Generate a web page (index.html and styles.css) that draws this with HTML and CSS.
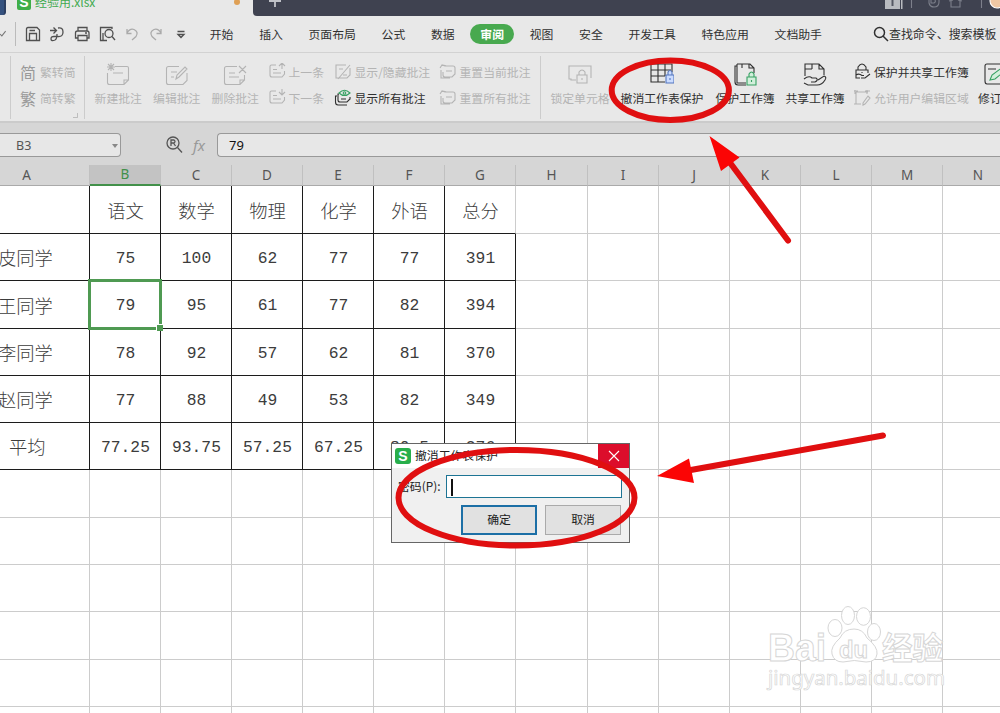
FILE: index.html
```html
<!DOCTYPE html>
<html lang="zh-CN">
<head>
<meta charset="utf-8">
<title>经验用.xlsx</title>
<link rel="stylesheet" href="styles.css">
</head>
<body>
<svg class="defs" aria-hidden="true">
  <symbol id="note" viewBox="0 0 24 24"><path d="M9 3.500H21Q22.500 3.500 22.500 5V17L18 21.500H3.500Q1.500 21.500 1.500 19.500V10M18 21.500V17H22.500"/></symbol>
  <symbol id="small-note" viewBox="0 0 18 18"><path d="M8 2H3.500Q2 2 2 3.500V12Q2 14 4 14H14L16.500 11V8M5 6.500H9M5 10H13"/></symbol>
  <symbol id="reset-note" viewBox="0 0 18 18"><path d="M1 5L3 2L6 3M3 2.500Q6 2 7 3H14Q16 3 16 5V11L13 14H6Q4 14 4 12V9M2 7V15H11M7 8H13"/></symbol>
</svg>
<div class="window">
  <header class="titlebar">
    <div class="home-tab"></div>
    <div class="file-tab">
      <span class="file-logo">S</span><span class="file-name">经验用.xlsx</span><i class="dot"></i>
    </div>
    <div class="title-rest">
      <svg class="plus" viewBox="0 0 12 12"><path d="M6 0V11M0 5H12"/></svg>
      <svg class="tools" viewBox="0 0 120 16">
        <path class="tool-fill" d="M5 0H20V9H5zM21 0h1.500V9H21z"/><path class="tool-one" d="M12.500 0V6"/>
        <path d="M31.500 0V8M49 0V3Q50 7 54 7Q59 7 59 2V0M51 0V3H54Q56 2 55 0M69 1L73 0M71 1V7H80V1M78 0L82 1M101.500 0V8"/>
        <circle class="avatar" cx="117" cy="1" r="7"/>
      </svg>
    </div>
  </header>

  <nav class="menubar">
    <svg class="chev" viewBox="0 0 16 24"><path d="M0 12L2 14L6 9"/></svg>
    <div class="quick">
      <svg viewBox="0 0 20 20"><path d="M5 3.500H14L16.500 6V16.500H3.500V5Q3.500 3.500 5 3.500M6.500 16V9.500H13.500V16M6.500 6.500H12"/></svg>
      <svg viewBox="0 0 20 20"><path d="M3 6.500H9M6.500 3.500L9.500 6.500L6.500 9.500M11 4Q16 3 16 8T11 12.500H7Q4 12.500 4 15T8 16Q10 15 10 10"/></svg>
      <svg viewBox="0 0 20 20"><path d="M6 7V3.500H15V7M6 14H3.500V9Q3.500 7 5.500 7H15Q17 7 17 9V14H15M6 11.500H15V16.500H6zM13 9H15"/></svg>
      <svg viewBox="0 0 20 20"><path d="M15 5V3.500H3.500V16.500H10M6 16V9"/><circle cx="12" cy="9.500" r="4"/><path d="M15 12.500L18 16"/></svg>
      <svg class="faint" viewBox="0 0 20 20"><path d="M5 5V9.500H9.500M5 9Q8 4 12 5.500Q17 8 14 12.500L10 16"/></svg>
      <svg class="faint" viewBox="0 0 20 20"><path d="M15 5V9.500H10.500M15 9Q12 4 8 5.500Q3 8 6 12.500L10 16"/></svg>
      <svg viewBox="0 0 20 20"><path d="M6.500 7.500H13.500M7 10.500L10 13.500L13 10.500z"/></svg>
    </div>
    <div class="tabs">
      <span>开始</span><span>插入</span><span>页面布局</span><span>公式</span><span>数据</span><span class="active">审阅</span><span>视图</span><span>安全</span><span>开发工具</span><span>特色应用</span><span>文档助手</span>
    </div>
    <div class="search">
      <svg viewBox="0 0 16 16"><circle cx="6.500" cy="6.500" r="5"/><path d="M10 10L15 15"/></svg><span>查找命令、搜索模板</span>
    </div>
  </nav>

  <section class="ribbon">
    <div class="group edge"></div>
    <div class="group convert off">
      <div class="line"><b>简</b><span>繁转简</span></div>
      <div class="line"><b>繁</b><span>简转繁</span></div>
      <svg class="launcher" viewBox="0 0 6 6"><path d="M0 5.500H5.500V0"/></svg>
    </div>
    <div class="group comments off">
      <div class="big w58"><svg viewBox="0 0 24 24"><use href="#note"/><path d="M1 4H9M5 0V8M2 1L8 7M8 1L2 7M7 10H17"/></svg><span>新建批注</span></div>
      <div class="big w58"><svg viewBox="0 0 24 24"><path d="M14 3.500H3.500Q1.500 3.500 1.500 5.500V19.500Q1.500 21.500 3.500 21.500H18L22 17.500V10M6 9H12M6 14H9M11 16L12 12L20 4L22 6L14 14z"/></svg><span>编辑批注</span></div>
      <div class="big w58"><svg viewBox="0 0 24 24"><path d="M14 3.500H3.500Q1.500 3.500 1.500 5.500V19.500Q1.500 21.500 3.500 21.500H17L21.500 17V12M17 21V17H21M6 10H12M6 14H16M16 3L23 10M23 3L16 10"/></svg><span>删除批注</span></div>
      <div class="stack s1">
        <div class="line"><svg viewBox="0 0 18 18"><use href="#small-note"/><path d="M14 6V0M11 3L14 0L17 3"/></svg><span>上一条</span></div>
        <div class="line"><svg viewBox="0 0 18 18"><use href="#small-note"/><path d="M14 0V6M11 3L14 6L17 3"/></svg><span>下一条</span></div>
      </div>
      <div class="stack s2">
        <div class="line"><svg viewBox="0 0 18 18"><path d="M12 2H2V15H13L16 12V5M4 16L16 2M5 6H9M9 12H13"/></svg><span>显示/隐藏批注</span></div>
        <div class="line on"><svg viewBox="0 0 18 18"><path d="M5 5H4V11Q4 13 6 13H13L16 10V8M3 7H1.500V13Q1.500 16 4 16H13M7 10H12"/><path class="green" d="M5 4Q10.500 -1.500 16 4Q10.500 9 5 4z"/><circle class="green" cx="10.500" cy="4" r="1.300"/></svg><span>显示所有批注</span></div>
      </div>
      <div class="stack s3">
        <div class="line"><svg viewBox="0 0 18 18"><use href="#reset-note"/></svg><span>重置当前批注</span></div>
        <div class="line"><svg viewBox="0 0 18 18"><use href="#reset-note"/></svg><span>重置所有批注</span></div>
      </div>
    </div>
    <div class="group protect">
      <div class="big w78 off"><svg viewBox="0 0 24 24"><path d="M8 17H3V16H1V3H23V15M9 12H19V20H9zM11 12V9Q14 5 17 9V12M14 15V17"/></svg><span>锁定单元格</span></div>
      <div class="big w84"><svg viewBox="0 0 24 24"><path d="M15 19H1V1H22V9M1 7H21M1 13H15M8 1V19M15 1V13"/><path class="blue" d="M16 12H24V20H16zM18 12V9Q20 6 22 9V12M20 15V17"/></svg><span>撤消工作表保护</span></div>
      <div class="big w81"><svg viewBox="0 0 24 24"><path d="M4 1H17L21 5V10M4 1V20H13M4 3H2V19Q2 22 5 22H13M9 1V5M16 1V5H21"/><path class="green fill" d="M14 14H23V22H14zM16 14V11Q18.500 7 21 11V14M18.500 17V19"/></svg><span>保护工作簿</span></div>
      <div class="big w60"><svg viewBox="0 0 24 24"><path d="M2 13V1H16L21 6V12M9 1V6M2 6H9M16 1V6H21M1 16Q6 12 9 15H13Q16 17 12 19H8M15 17L21 13Q24 14 22 17Q19 22 14 22H5L1 20"/></svg><span>共享工作簿</span></div>
      <div class="stack s4">
        <div class="line"><svg viewBox="0 0 18 18"><path d="M7 15H3V7H15V10M5 7V4Q9 -2 13 4V7M9 9V10M3 12Q6 10 9 12.500H11M8 15H12L17 11"/></svg><span>保护并共享工作簿</span></div>
        <div class="line off"><svg viewBox="0 0 18 18"><path d="M3 3H15M3 3V15M2 1V5M1 2H5M14 1V5M12 2H17M1 15H8M10 14L15 7L17 9L12 15L10 16z"/></svg><span>允许用户编辑区域</span></div>
      </div>
      <div class="big revise"><svg viewBox="0 0 24 24"><path d="M24 1H4Q2 1 2 3V18Q2 21 4 21H24M5 6H13"/><path class="green fill" d="M7 17L9 12L20 4L23 7L12 16z"/></svg><span>修订</span></div>
    </div>
  </section>

  <section class="formula">
    <div class="namebox"><span>B3</span><i></i></div>
    <svg class="lens" viewBox="0 0 18 18"><circle cx="7" cy="7" r="6"/><path d="M11.500 11.500L16 16.500M5 10V4H8Q10 5.500 8 7H5M7.500 7L9.500 10"/></svg>
    <em class="fx">fx</em>
    <div class="field">79</div>
  </section>

  <table class="sheet">
    <colgroup><col class="c-a"><col><col><col><col><col><col><col class="c-h"><col><col><col><col><col><col></colgroup>
    <thead><tr><th class="h-a">A</th><th class="sel">B</th><th>C</th><th>D</th><th>E</th><th>F</th><th>G</th><th>H</th><th>I</th><th>J</th><th>K</th><th>L</th><th>M</th><th>N</th></tr></thead>
    <tbody>
      <tr class="data head tall"><td class="name"></td><td>语文</td><td>数学</td><td>物理</td><td>化学</td><td>外语</td><td class="open">总分</td><td><td><td><td><td><td><td></tr>
      <tr class="data"><td class="name">皮同学</td><td>75</td><td>100</td><td>62</td><td>77</td><td>77</td><td>391</td><td><td><td><td><td><td><td></tr>
      <tr class="data tall"><td class="name">王同学</td><td class="cursor">79</td><td>95</td><td>61</td><td>77</td><td>82</td><td>394</td><td><td><td><td><td><td><td></tr>
      <tr class="data"><td class="name">李同学</td><td>78</td><td>92</td><td>57</td><td>62</td><td>81</td><td>370</td><td><td><td><td><td><td><td></tr>
      <tr class="data"><td class="name">赵同学</td><td>77</td><td>88</td><td>49</td><td>53</td><td>82</td><td>349</td><td><td><td><td><td><td><td></tr>
      <tr class="data"><td class="name average">平均</td><td>77.25</td><td>93.75</td><td>57.25</td><td>67.25</td><td>80.5</td><td>376</td><td><td><td><td><td><td><td></tr>
      <tr class="tall"><td><td><td><td><td><td><td><td><td><td><td><td><td><td></tr>
      <tr><td><td><td><td><td><td><td><td><td><td><td><td><td><td></tr>
      <tr><td><td><td><td><td><td><td><td><td><td><td><td><td><td></tr>
      <tr class="tall"><td><td><td><td><td><td><td><td><td><td><td><td><td><td></tr>
      <tr><td><td><td><td><td><td><td><td><td><td><td><td><td><td></tr>
      <tr><td><td><td><td><td><td><td><td><td><td><td><td><td><td></tr>
    </tbody>
  </table>

  <svg class="watermark" viewBox="0 0 190 100">
    <text class="wm-big" x="8" y="61" textLength="58" lengthAdjust="spacingAndGlyphs">Bai</text>
    <ellipse cx="75" cy="28" rx="7" ry="8.500"/><ellipse cx="88" cy="15.500" rx="6.500" ry="9"/><ellipse cx="103.500" cy="16.500" rx="7" ry="8.800"/><ellipse cx="114" cy="32" rx="6.500" ry="8.500"/>
    <path d="M94 29Q84 29 80 38Q70 47 72 54Q74 62 83 62Q94 59 106 62Q116 62 117 54Q118 47 107 38Q103 29 94 29z"/>
    <text class="wm-du" x="79" y="58" textLength="29" lengthAdjust="spacingAndGlyphs">du</text>
    <text class="wm-cn" x="122" y="59" textLength="61" lengthAdjust="spacingAndGlyphs">经验</text>
    <text class="wm-url" x="8" y="85" textLength="177" lengthAdjust="spacingAndGlyphs">jingyan.baidu.com</text>
  </svg>

  <div class="dialog">
    <div class="dialog-title"><span class="dialog-logo">S</span><span class="dialog-name">撤消工作表保护</span>
      <span class="close"><svg viewBox="0 0 12 12"><path d="M1 1L11 11M11 1L1 11"/></svg></span></div>
    <div class="dialog-row"><label>密码(P):</label><div class="password"><i></i></div></div>
    <div class="dialog-actions"><button class="primary">确定</button><button>取消</button></div>
  </div>

  <svg class="marks" viewBox="0 0 1000 713">
    <ellipse cx="670.300" cy="90.200" rx="58.600" ry="29.700"/>
    <ellipse cx="516.500" cy="497.700" rx="118" ry="47.800"/>
    <path class="shaft" d="M728 160L788 240.500M688 470.500L883 435.500"/>
    <path class="tip" d="M709.500 136L739.500 157.500L721 171zM657 476L689 458.500L694 483z"/>
  </svg>
</div>
</body>
</html>
```

FILE: styles.css
```css
* { box-sizing: border-box; }
body { margin: 0; }
.defs { display: none; }
.window {
  position: relative;
  width: 1000px; height: 713px;
  overflow: hidden;
  background: #fff;
  font: 11.85px/16px "Noto Sans CJK SC", sans-serif;
  color: #303030;
  white-space: nowrap;
}
svg { fill: none; stroke: currentColor; stroke-width: 1.1; flex: none; }

.titlebar { display: flex; height: 16px; background: #e8e8e8; overflow: hidden; }
.home-tab { width: 6px; height: 15px; background: #35527f; border-right: 2px solid #2c3f62; border-radius: 0 0 3px 0; }
.file-tab { display: flex; width: 247px; padding-left: 11px; color: #3faa50; }
.file-logo { width: 14px; height: 10px; background: #3fae49; color: #fff; font: bold 14px/4px "Liberation Sans", sans-serif; text-align: center; overflow: hidden; border-radius: 0 0 2px 2px; }
.file-name { margin: -6px 0 0 4px; font-size: 12px; }
.dot { width: 6px; height: 6px; margin: -1px 13px 0 auto; background: #dfa055; border-radius: 50%; }
.title-rest { display: flex; flex: 1; height: 15.500px; background: #3f4250; border-radius: 0 0 0 4px; color: #7d808b; }
.plus { width: 12px; height: 12px; margin: -4px 0 0 16px; stroke: #c0c2c8; stroke-width: 1.800; }
.tools { width: 120px; height: 16px; margin-left: auto; }
.tool-fill { fill: #b9bbc0; stroke: none; }
.tool-one { stroke: #555864; stroke-width: 2; }
.avatar { fill: #f0c8a4; stroke: #fff; }

.menubar { display: flex; align-items: center; height: 37px; background: #e8e8e8; border-bottom: 1px solid #d2d2d2; }
.chev { width: 16px; height: 24px; border-right: 1px solid #bbb; color: #777; }
.quick { display: flex; gap: 4.800px; margin-left: 6.500px; color: #505050; }
.quick svg { width: 20px; height: 20px; stroke-width: 1.300; }
.quick .faint { color: #aaa; }
.tabs { display: flex; align-items: center; gap: 25.700px; margin-left: 18.500px; }
.tabs .active { margin: 0 -10px; padding: 0 10px; line-height: 20px; border-radius: 10px; background: #48a94f; color: #fff; font-weight: 700; }
.search { display: flex; align-items: center; margin-left: 51px; font-size: 11.950px; }
.search svg { width: 16px; height: 16px; stroke-width: 1.500; }

.ribbon { display: flex; height: 68px; background: #e8e8e8; }
.group { display: flex; flex: none; height: 63px; margin-top: 3px; border-right: 1px solid #ccc; }
.off { color: #b4b4b4; }
.on { color: #303030; }
.green { stroke: #36a062; }
.fill { fill: #d2efdb; }
.blue { stroke: #5577bf; fill: #cbdcff; }
.edge { width: 11px; }
.convert { width: 74px; flex-direction: column; padding: 3px 0 0 9px; }
.convert .line b { width: 20px; font-size: 16px; font-weight: 400; color: #999; }
.line { display: flex; align-items: center; height: 25.700px; line-height: 26px; }
.launcher { width: 5px; height: 5px; margin: 3px 6px 0 auto; }
.comments { width: 456px; padding-left: 4px; }
.big { display: flex; flex: none; flex-direction: column; align-items: center; padding-top: 7px; }
.big svg { width: 24px; height: 24px; }
.big span { margin-top: 3px; }
.w58 { width: 58.500px; }
.stack { flex: none; padding-top: 3px; }
.stack svg { width: 18px; height: 18px; margin-right: 3px; }
.s1 { width: 67px; padding-left: 3px; }
.s2 { width: 104px; padding-left: 2px; }
.s3 { padding-left: 3px; }
.protect { border: 0; }
.w78 { width: 78px; }
.w84 { width: 86px; }
.w81 { width: 80px; }
.w60 { width: 60px; }
.s4 { width: 132px; padding-left: 8px; }
.revise { width: 28px; align-items: flex-start; padding-left: 1px; }
.revise svg { margin-left: 5px; }

.formula { display: flex; align-items: center; height: 44px; padding-top: 2px; background: #d6d6d6; border-top: 2px solid #cbcbcb; }
.namebox, .field { height: 24px; background: #e7e7e7; border: 1px solid #999; font: 12.500px/23px "Noto Sans", sans-serif; }
.namebox { display: flex; width: 121px; padding-left: 16px; border-left: 0; border-radius: 0 4px 4px 0; color: #555; }
.namebox i { margin: 10px 2px 0 auto; border: 3px solid transparent; border-top: 4px solid #888; height: 0; }
.lens { width: 18px; height: 18px; margin-left: 45px; color: #555; stroke-width: 1.300; }
.fx { width: 16px; margin-left: 9px; color: #999; font: italic 15px/20px "Noto Sans", sans-serif; }
.field { flex: 1; margin-left: 8px; padding-left: 11px; border-right: 0; border-radius: 4px 0 0 4px; color: #111; font-size: 13px; }

.sheet { width: 1014px; table-layout: fixed; border-collapse: separate; border-spacing: 0; }
col { width: 71px; }
.c-a { width: 90px; }
.c-h { width: 72px; }
th { height: 21px; padding: 0; background: #d6d6d6; border-right: 1px solid #c0c0c0; border-bottom: 1px solid #aaa; color: #555; font: 13.500px/19px "Noto Sans", sans-serif; }
.h-a { padding-right: 36px; }
.sel { background: #c3c3c3; color: #42904a; border-bottom: 2px solid #42904a; }
td { height: 47px; padding: 3px 0 0 1px; border-right: 1px solid #ccc; border-bottom: 1px solid #ccc; text-align: center; }
.tall td { height: 48px; }
.data td { font: 300 16.300px/24px "Liberation Mono", "Noto Sans CJK SC", monospace; }
.data td:nth-child(-n+7) { border-color: #1c1c1c; color: #3c3c3c; }
.data.head td, .data td.name { padding-top: 0; font: 300 18.300px/24px "Noto Sans CJK SC", sans-serif; }
.data td.name { padding: 0; text-align: left; text-indent: -2px; }
.data td.average { text-indent: 9px; }
.data td.open { border-right-color: #ccc; }
.data td.cursor { position: relative; }
.cursor::before { content: ""; position: absolute; inset: -2px -2px -2px -2px; border: 3px solid #4f9a52; }
.cursor::after { content: ""; position: absolute; right: -3px; bottom: -3px; width: 6px; height: 6px; background: #4f9a52; border: solid #fff; border-width: 1px 0 0 1px; }

.watermark { position: absolute; left: 760px; top: 600px; width: 190px; height: 100px; fill: #fff; stroke: #d6d6d6; stroke-width: 1; }
.wm-big { font: bold 39px "Liberation Sans", sans-serif; }
.wm-du { font: bold 24px "Liberation Sans", sans-serif; }
.wm-cn { font: bold 31px "Noto Sans CJK SC", sans-serif; }
.wm-url { font: 20px "Noto Sans", sans-serif; stroke-width: .7; }

.dialog { position: absolute; left: 391px; top: 443px; width: 239px; height: 100px; background: #f0f0f0; border: 1px solid #666; color: #222; }
.dialog-title { display: flex; align-items: center; height: 24px; padding-left: 3px; background: #fff; }
.dialog-logo { width: 16px; height: 16px; border-radius: 3px; background: #28ae4b; color: #fff; font: bold 14px/16px "Liberation Sans", sans-serif; text-align: center; }
.dialog-name { margin: -2px 0 0 4px; }
.close { display: flex; align-items: center; justify-content: center; width: 31px; height: 24px; margin-left: auto; background: #dc0d2b; color: #fff; }
.close svg { width: 12px; height: 12px; }
.dialog-row { display: flex; align-items: center; justify-content: space-between; padding: 7px 7px 0; }
.dialog-row label { margin: -2px 0 0 -1px; }
.password { width: 176px; height: 23px; padding: 3px 4px; border: 1px solid #1d7494; background: #fff; }
.password i { display: block; width: 1.500px; height: 17px; background: #111; }
.dialog-actions { display: flex; gap: 8px; padding: 7px 0 0 69px; }
button { width: 76px; height: 30px; padding: 0 0 2px; border: 1px solid #aaa; background: #e1e1e1; color: #222; font: inherit; }
.primary { border: 2px solid #1c6fa6; }

.marks { position: absolute; left: 0; top: 0; width: 1000px; height: 713px; stroke: #e00f10; stroke-width: 6; pointer-events: none; }
.shaft { stroke-linecap: round; }
.tip { fill: #fb0505; stroke: none; }
```
